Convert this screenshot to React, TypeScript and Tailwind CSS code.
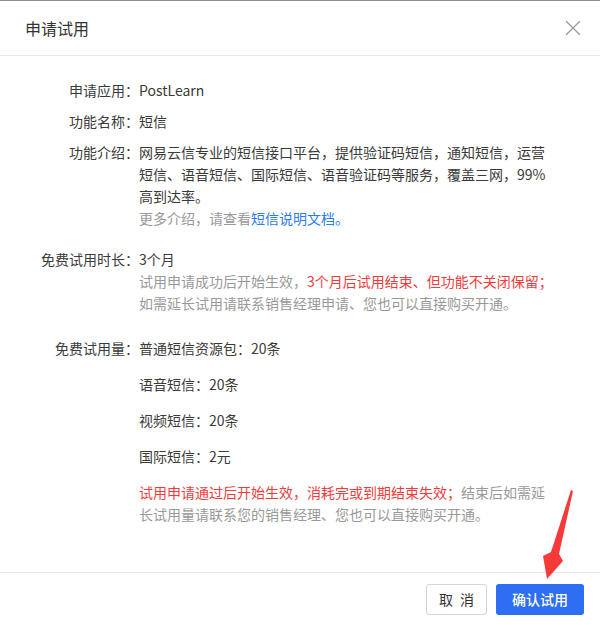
import { X } from "lucide-react"

const font = { fontFamily: '"Noto Sans CJK SC", "Liberation Sans", sans-serif' }

const freeItems = ["普通短信资源包：20条", "语音短信：20条", "视频短信：20条", "国际短信：2元"]

function Row({ label, children, className = "" }: { label: string; children: React.ReactNode; className?: string }) {
  return (
    <div className={"flex text-[14px] leading-[22px] " + className}>
      <div className="w-[100px] shrink-0 text-right text-[#3a3a3a]">{label}：</div>
      <div className="w-[416px] text-[#3a3a3a]">{children}</div>
    </div>
  )
}

export default function App() {
  return (
    <div
      className="relative flex h-[625px] w-[600px] flex-col overflow-hidden border-t border-[#8c8c8c] bg-white"
      style={font}
    >
      <div className="flex h-[55px] shrink-0 items-center justify-between border-b border-[#e8e8e8] pl-[25px] pr-[14px]">
        <span className="text-[16px] text-[#333]">申请试用</span>
        <X className="h-[26px] w-[26px] text-[#999]" strokeWidth={1.2} />
      </div>

      <div className="flex-1 pl-[39px] pt-[23px]">
        <Row label="申请应用">PostLearn</Row>
        <Row label="功能名称" className="mt-[9px]">短信</Row>
        <Row label="功能介绍" className="mt-[9px]">
          <p>网易云信专业的短信接口平台，提供验证码短信，通知短信，运营短信、语音短信、国际短信、语音验证码等服务，覆盖三网，99%高到达率。</p>
          <p className="text-[#999]">
            更多介绍，请查看<a className="text-[#2a7bf5]">短信说明文档。</a>
          </p>
        </Row>

        <Row label="免费试用时长" className="mt-[19px]">
          <p>3个月</p>
          <p className="text-[#999]">
            试用申请成功后开始生效，<span className="text-[#f33b3b]">3个月后试用结束、但功能不关闭保留；</span>
          </p>
          <p className="text-[#999]">如需延长试用请联系销售经理申请、您也可以直接购买开通。</p>
        </Row>

        <Row label="免费试用量" className="mt-[23px]">
          <div className="flex flex-col gap-[14px]">
            {freeItems.map((item) => (
              <p key={item}>{item}</p>
            ))}
            <p className="text-[#999]">
              <span className="text-[#f33b3b]">试用申请通过后开始生效，消耗完或到期结束失效；</span>
              结束后如需延长试用量请联系您的销售经理、您也可以直接购买开通。
            </p>
          </div>
        </Row>
      </div>

      <div className="flex h-[53px] shrink-0 items-center justify-end gap-[9px] border-t border-[#e8e8e8] pr-[16px]">
        <button
          type="button"
          className="flex h-[31px] w-[61px] items-center justify-center gap-[7px] rounded-[3px] border border-[#d4d4d4] bg-white text-[14px] text-[#333]"
        >
          <span>取</span>
          <span>消</span>
        </button>
        <button
          type="button"
          className="h-[31px] w-[88px] rounded-[3px] bg-[#2d6ef3] text-[14px] font-medium text-white"
        >
          确认试用
        </button>
      </div>

      {/* annotation arrow */}
      <svg className="pointer-events-none absolute left-0 top-0" width="600" height="625" viewBox="0 0 600 625">
        <polygon
          points="571,489 573,490 559,553 563,560 547,578 543,555 551,551"
          fill="#f63a3a"
        />
      </svg>
    </div>
  )
}
